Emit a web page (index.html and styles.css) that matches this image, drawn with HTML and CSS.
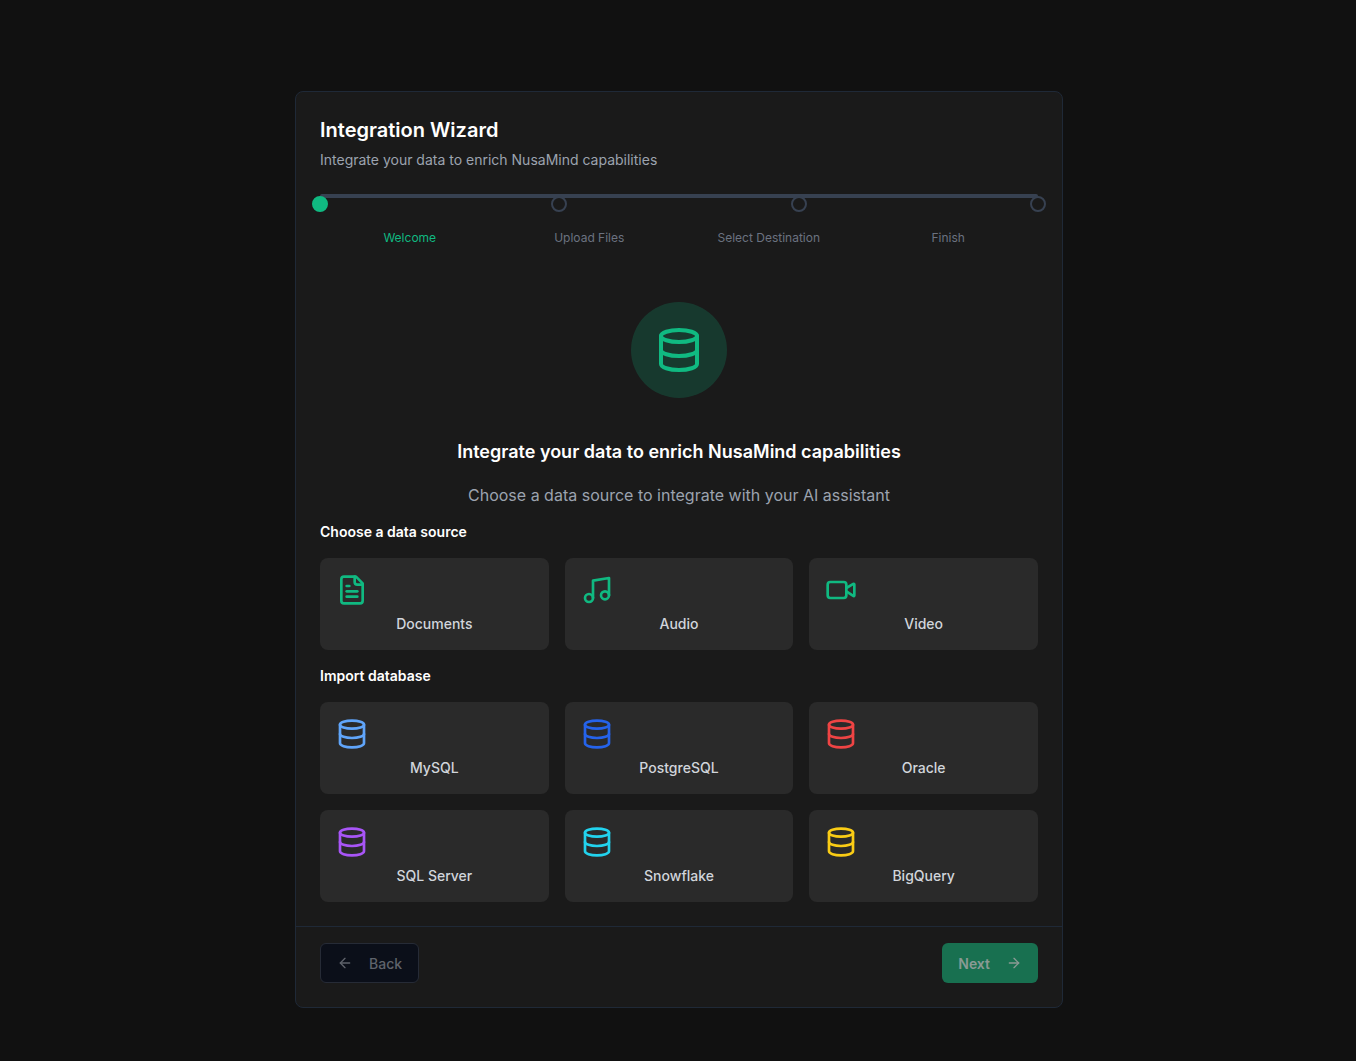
FILE: index.html
```html
<!DOCTYPE html>
<html lang="en">
<head>
<meta charset="utf-8">
<title>Integration Wizard</title>
<link rel="stylesheet" href="styles.css">
</head>
<body>
<svg class="defs" width="0" height="0" aria-hidden="true">
  <symbol id="db" viewBox="0 0 24 24"><ellipse cx="12" cy="5" rx="9" ry="3"/><path d="M3 5V19A9 3 0 0 0 21 19V5"/><path d="M3 12A9 3 0 0 0 21 12"/></symbol>
</svg>
<main class="wizard">
  <header class="head">
    <h1 class="title">Integration Wizard</h1>
    <p class="subtitle">Integrate your data to enrich NusaMind capabilities</p>
  </header>
  <div class="stepper">
    <div class="track"></div>
    <div class="dots">
      <span class="dot active"></span><span class="dot"></span><span class="dot"></span><span class="dot"></span>
    </div>
    <div class="labels">
      <span class="label active">Welcome</span><span class="label">Upload Files</span><span class="label">Select Destination</span><span class="label">Finish</span>
    </div>
  </div>
  <section class="body">
    <div class="hero"><svg class="ico hero-ico"><use href="#db"/></svg></div>
    <h2 class="heading">Integrate your data to enrich NusaMind capabilities</h2>
    <p class="lead">Choose a data source to integrate with your AI assistant</p>
    <h3 class="section">Choose a data source</h3>
    <div class="grid">
      <button class="tile"><svg class="ico tile-ico green" viewBox="0 0 24 24"><path d="M15 2H6a2 2 0 0 0-2 2v16a2 2 0 0 0 2 2h12a2 2 0 0 0 2-2V7Z"/><path d="M14 2v4a2 2 0 0 0 2 2h4"/><path d="M10 9H8"/><path d="M16 13H8"/><path d="M16 17H8"/></svg><span class="tile-name">Documents</span></button>
      <button class="tile"><svg class="ico tile-ico green" viewBox="0 0 24 24"><path d="M9 18V5l12-2v13"/><circle cx="6" cy="18" r="3"/><circle cx="18" cy="16" r="3"/></svg><span class="tile-name">Audio</span></button>
      <button class="tile"><svg class="ico tile-ico green" viewBox="0 0 24 24"><path d="m16 13 5.223 3.482a.5.5 0 0 0 .777-.416V7.87a.5.5 0 0 0-.752-.432L16 10.5"/><rect x="2" y="6" width="14" height="12" rx="2"/></svg><span class="tile-name">Video</span></button>
    </div>
    <h3 class="section">Import database</h3>
    <div class="grid">
      <button class="tile"><svg class="ico tile-ico c-mysql"><use href="#db"/></svg><span class="tile-name">MySQL</span></button>
      <button class="tile"><svg class="ico tile-ico c-pg"><use href="#db"/></svg><span class="tile-name">PostgreSQL</span></button>
      <button class="tile"><svg class="ico tile-ico c-oracle"><use href="#db"/></svg><span class="tile-name">Oracle</span></button>
      <button class="tile"><svg class="ico tile-ico c-mssql"><use href="#db"/></svg><span class="tile-name">SQL Server</span></button>
      <button class="tile"><svg class="ico tile-ico c-snow"><use href="#db"/></svg><span class="tile-name">Snowflake</span></button>
      <button class="tile"><svg class="ico tile-ico c-bq"><use href="#db"/></svg><span class="tile-name">BigQuery</span></button>
    </div>
  </section>
  <footer class="foot">
    <button class="btn back"><svg class="ico btn-ico" viewBox="0 0 24 24"><path d="m12 19-7-7 7-7"/><path d="M19 12H5"/></svg>Back</button>
    <button class="btn next">Next<svg class="ico btn-ico" viewBox="0 0 24 24"><path d="M5 12h14"/><path d="m12 5 7 7-7 7"/></svg></button>
  </footer>
</main>
</body>
</html>
```
FILE: styles.css
```css
* { box-sizing: border-box; }
html, body { margin: 0; height: 100%; }
body {
  background: #111111;
  font-family: Inter, "Liberation Sans", sans-serif;
  display: flex;
  justify-content: center;
  padding-top: 91px;
  padding-left: 0;
  min-height: 1061px;
}
.defs { position: absolute; }
.wizard {
  width: 768px;
  height: 917px;
  background: #1a1a1a;
  border: 1px solid #1f2937;
  border-radius: 8px;
  margin-left: 2px;
}
.head { padding: 24px 24px 0; }
.title { margin: 0; font-size: 20px; line-height: 28px; font-weight: 600; color: #ffffff; }
.subtitle { margin: 6px 0 0; font-size: 14px; line-height: 20px; color: #9ca3af; }
.stepper { padding: 24px 24px 0; }
.track { height: 4px; background: #374151; border-radius: 2px; }
.dots { display: flex; justify-content: space-between; margin: -2px -8px 0; }
.dot { width: 16px; height: 16px; border-radius: 50%; border: 2px solid #374151; background: #1a1a1a; }
.dot.active { background: #10b981; border-color: #10b981; }
.labels { display: grid; grid-template-columns: repeat(4, 1fr); margin-top: 18px; }
.label { font-size: 12px; line-height: 16px; color: #6b7280; text-align: center; }
.label.active { color: #10b981; }
.body { padding: 56px 24px 24px; }
.hero {
  width: 96px; height: 96px; border-radius: 50%;
  background: rgba(16, 185, 129, 0.2);
  margin: 0 auto;
  display: flex; align-items: center; justify-content: center;
}
.ico { fill: none; stroke: currentColor; stroke-width: 2; stroke-linecap: round; stroke-linejoin: round; display: block; flex: none; }
.hero-ico { width: 48px; height: 48px; color: #10b981; }
.heading { margin: 40px 0 0; font-size: 18px; line-height: 28px; font-weight: 600; color: #ffffff; text-align: center; }
.lead { margin: 17px 0 0; font-size: 16px; line-height: 24px; color: #9ca3af; text-align: center; }
.section { margin: 15px 0 16px; font-size: 14px; line-height: 20px; font-weight: 600; color: #ffffff; }
.grid + .section { margin-top: 16px; }
.grid { display: grid; grid-template-columns: repeat(3, 1fr); gap: 16px; }
.tile {
  display: flex; flex-direction: column; gap: 8px;
  height: 92px; padding: 16px;
  background: #2a2a2a; border: 0; border-radius: 8px;
  font-family: inherit; text-align: center;
}
.tile-ico { width: 32px; height: 32px; }
.tile-name { font-size: 14px; line-height: 20px; font-weight: 500; color: #d1d5db; }
.green { color: #10b981; }
.c-mysql { color: #60a5fa; }
.c-pg { color: #2563eb; }
.c-oracle { color: #ef4444; }
.c-mssql { color: #a855f7; }
.c-snow { color: #22d3ee; }
.c-bq { color: #facc15; }
.foot {
  border-top: 1px solid #1f2937;
  padding: 16px 24px 24px;
  display: flex; justify-content: space-between;
}
.btn {
  height: 40px; display: flex; align-items: center; gap: 16px;
  padding: 0 16px; border-radius: 6px;
  font-family: inherit; font-size: 14px; font-weight: 500;
}
.btn-ico { width: 16px; height: 16px; }
.back { background: #0b0f19; border: 1px solid #262b36; color: #5f636b; }
.next { background: #187050; border: 0; color: #8a9a94; font-weight: 600; }
```
